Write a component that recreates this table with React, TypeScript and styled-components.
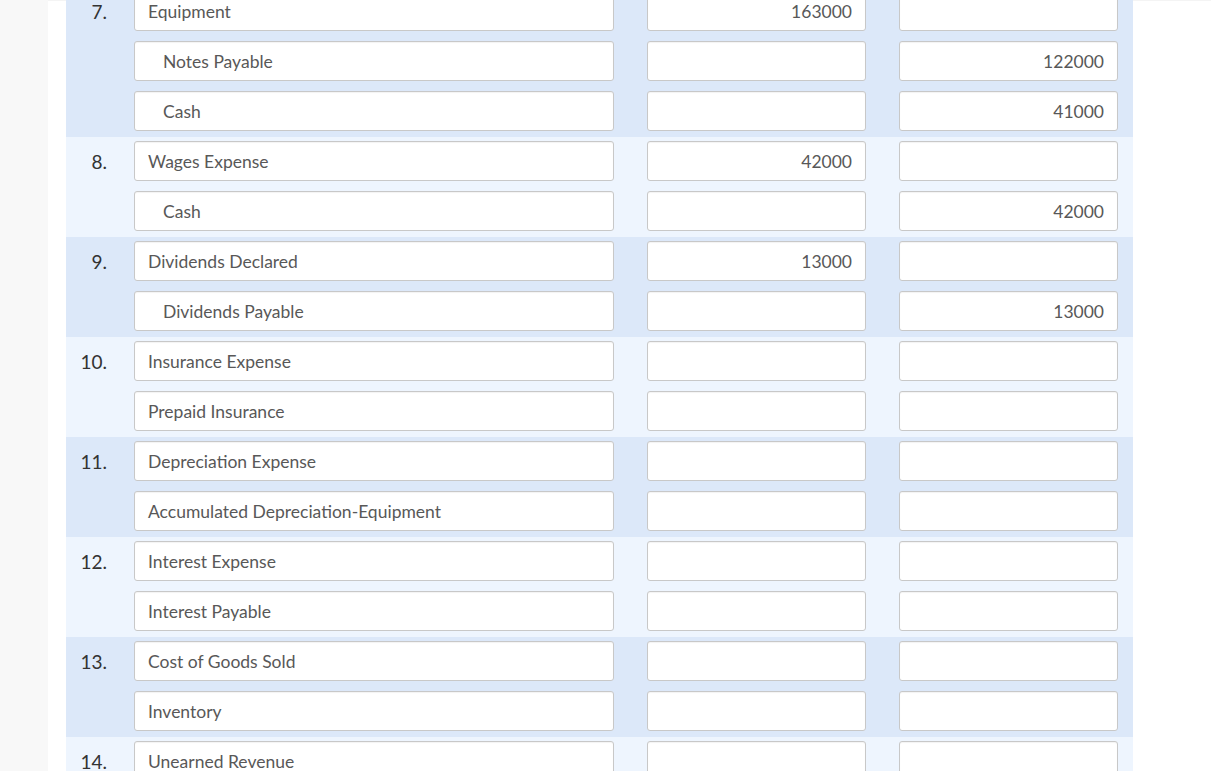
import React from "react";
import styled, { createGlobalStyle } from "styled-components";

const Global = createGlobalStyle`
  html, body { margin: 0; padding: 0; background: #ffffff; overflow: hidden; }
  body { font-family: Lato, "Open Sans", sans-serif; }
`;

const Page = styled.div`
  display: flex;
  width: 1211px;
  height: 771px;
  overflow: hidden;
`;

const Sidebar = styled.div`
  width: 48px;
  flex: none;
  background: #f8f8f8;
`;

const Main = styled.div`
  flex: 1;
  padding-left: 18px;
  border-top: 1px solid #f4f4f4;
  box-sizing: border-box;
`;

const Table = styled.div`
  width: 1067px;
  margin-top: -14px;
  display: flex;
  flex-direction: column;
`;

const Group = styled.div<{ $dark: boolean }>`
  display: grid;
  grid-template-columns: 68px 480px 252px 252px;
  padding: 4px 15px 6px 0;
  row-gap: 10px;
  background: ${(p) => (p.$dark ? "#dce8f9" : "#eef5fe")};
`;

const Num = styled.div`
  height: 40px;
  display: flex;
  align-items: center;
  justify-content: flex-end;
  padding-right: 27px;
  font-size: 19px;
  color: #333333;
`;

const Field = styled.div<{ $indent?: boolean; $amount?: boolean }>`
  height: 40px;
  width: ${(p) => (p.$amount ? "219px" : "auto")};
  justify-self: ${(p) => (p.$amount ? "end" : "stretch")};
  box-sizing: border-box;
  border: 1px solid #c8c8c8;
  border-radius: 3px;
  background: #ffffff;
  box-shadow: inset 0 1px 1px rgba(0, 0, 0, 0.05);
  display: flex;
  align-items: center;
  justify-content: ${(p) => (p.$amount ? "flex-end" : "flex-start")};
  padding: 0 ${(p) => (p.$amount ? "13px" : "0")} 0
    ${(p) => (p.$amount ? "0" : p.$indent ? "28px" : "13px")};
  font-size: 17.5px;
  color: #585858;
  white-space: nowrap;
`;

type Line = { account: string; indent?: boolean; debit?: string; credit?: string };
type Entry = { n: number; lines: Line[] };

const entries: Entry[] = [
  {
    n: 7,
    lines: [
      { account: "Equipment", debit: "163000" },
      { account: "Notes Payable", indent: true, credit: "122000" },
      { account: "Cash", indent: true, credit: "41000" },
    ],
  },
  {
    n: 8,
    lines: [
      { account: "Wages Expense", debit: "42000" },
      { account: "Cash", indent: true, credit: "42000" },
    ],
  },
  {
    n: 9,
    lines: [
      { account: "Dividends Declared", debit: "13000" },
      { account: "Dividends Payable", indent: true, credit: "13000" },
    ],
  },
  { n: 10, lines: [{ account: "Insurance Expense" }, { account: "Prepaid Insurance" }] },
  {
    n: 11,
    lines: [{ account: "Depreciation Expense" }, { account: "Accumulated Depreciation-Equipment" }],
  },
  { n: 12, lines: [{ account: "Interest Expense" }, { account: "Interest Payable" }] },
  { n: 13, lines: [{ account: "Cost of Goods Sold" }, { account: "Inventory" }] },
  { n: 14, lines: [{ account: "Unearned Revenue" }, { account: "Service Revenue" }] },
];

export default function App() {
  return (
    <>
      <Global />
      <Page>
        <Sidebar />
        <Main>
          <Table>
            {entries.map((e, gi) => (
              <Group key={e.n} $dark={gi % 2 === 0}>
                {e.lines.map((l, li) => (
                  <React.Fragment key={li}>
                    <Num>{li === 0 ? `${e.n}.` : ""}</Num>
                    <Field $indent={l.indent}>{l.account}</Field>
                    <Field $amount>{l.debit ?? ""}</Field>
                    <Field $amount>{l.credit ?? ""}</Field>
                  </React.Fragment>
                ))}
              </Group>
            ))}
          </Table>
        </Main>
      </Page>
    </>
  );
}
